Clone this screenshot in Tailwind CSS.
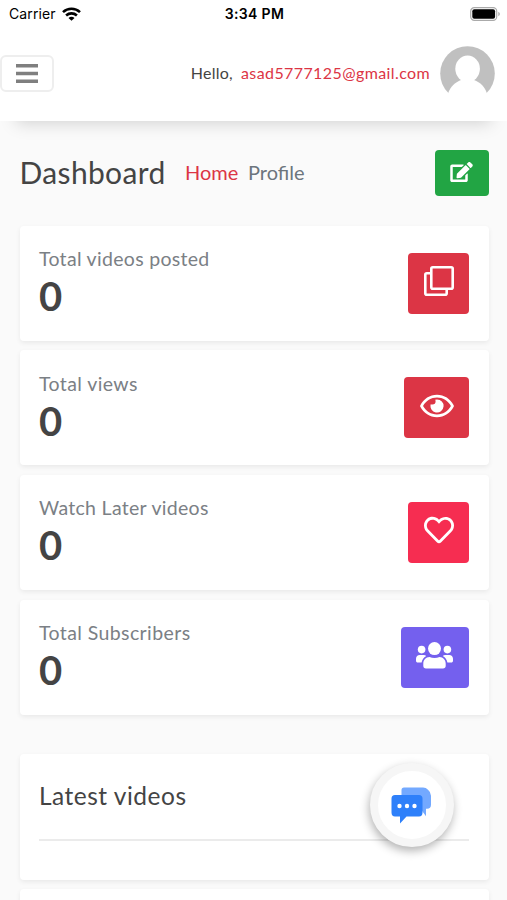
<!DOCTYPE html>
<html lang="en">
<head>
    <meta charset="UTF-8">
    <meta name="viewport" content="width=device-width, initial-scale=1.0">
    <title>Dashboard</title>
    <script src="https://cdn.jsdelivr.net/npm/@tailwindcss/browser@4"></script>
</head>
<body class="bg-[#fafafa] font-[Lato,sans-serif] text-[#444] h-[900px] overflow-hidden relative">
    <!-- Header -->
    <header class="relative h-[121px] bg-white shadow-[0_18px_16px_-16px_rgba(0,0,0,0.17)]">
        <!-- Status bar -->
        <div class="grid grid-cols-3 items-center h-[27px] pl-[9px] pr-[7px] font-[Inter,sans-serif] text-black">
            <div class="flex items-center gap-1.5 text-[14px] tracking-[0.1px]">
                <span>Carrier</span>
                <svg class="w-[19px] h-[14px]" viewBox="0 0 19 14" fill="none" stroke="currentColor" stroke-width="2.6">
                    <path d="M1 5.1C5.8.6 13.2.6 18 5.1"/>
                    <path d="M4.1 8.5c3.1-2.8 7.7-2.8 10.8 0"/>
                    <path d="M9.5 13.8 6.5 10.9c1.7-1.5 4.3-1.5 6 0z" fill="currentColor" stroke="none"/>
                </svg>
            </div>
            <div class="text-center text-[14px] font-semibold tracking-[0.35px]">3:34 PM</div>
            <svg class="justify-self-end w-[30px] h-[14px]" viewBox="0 0 30 14">
                <rect x=".7" y=".7" width="26" height="12.6" rx="3.6" fill="#fff" stroke="#aaa" stroke-width="1.2"/>
                <rect x="2.3" y="2.3" width="22.8" height="9.4" rx="2" fill="#000"/>
                <path d="M28.3 4.8c2 .8 2 3.6 0 4.4z" fill="#aaa"/>
            </svg>
        </div>
        <!-- Navbar -->
        <div class="flex items-center h-[93px] pr-[12px]">
            <button class="flex items-center justify-center w-[54px] h-[37px] border-2 border-[#eee] rounded-md">
                <svg class="w-[22px] h-[19px]" viewBox="0 0 22 19" fill="none" stroke="#7f7f7f" stroke-width="3.4">
                    <path d="M0 1.7h22M0 9.500h22M0 17.300h22"/>
                </svg>
            </button>
            <span class="ml-auto pb-px text-[16px] tracking-[0.25px]">Hello,</span>
            <a href="#" class="ml-2 pb-px w-[188px] text-[16px] tracking-[0.4px] text-[#dc3545]">asad5777125@gmail.com</a>
            <svg class="ml-[11px] w-[55px] h-[55px]" viewBox="0 0 55 55">
                <circle cx="27.5" cy="27.5" r="27.3" fill="#c0c0c0"/>
                <ellipse cx="27.6" cy="22.800" rx="12.300" ry="13.200" fill="#fff"/>
                <path d="M8 47.500C10.500 40.500 15 36.500 21 34h13c6.500 2.500 10.500 6.500 13 13.500V55H8z" fill="#fff"/>
            </svg>
        </div>
    </header>

    <main class="pl-[19.5px] pr-[18.5px]">
        <!-- Title row -->
        <div class="flex items-center mt-[29px] h-[46px]">
            <h1 class="w-[165.5px] pb-0.5 text-[30px] tracking-[0.35px] whitespace-nowrap">Dashboard</h1>
            <nav class="flex pb-0.5 text-[20px] whitespace-nowrap">
                <a href="#" class="w-[63px] text-[#dc3545]">Home</a>
                <span class="text-[#6c757d]">Profile</span>
            </nav>
            <button class="ml-auto flex items-center justify-center w-[54px] h-[46px] pb-0.5 rounded-[4px] bg-[#22a544]">
                <svg class="w-[23px] h-[20px]" viewBox="0 0 576 512" fill="#fff">
                    <path d="M402.600 83.200l90.200 90.200c3.800 3.800 3.800 10 0 13.800L274.400 405.600l-92.800 10.300c-12.400 1.400-22.900-9.100-21.500-21.500l10.300-92.800L388.800 83.200c3.800-3.800 10-3.800 13.800 0zm162-22.900l-48.800-48.800c-15.200-15.200-39.900-15.200-55.200 0l-35.400 35.400c-3.800 3.800-3.800 10 0 13.800l90.200 90.200c3.800 3.800 10 3.800 13.800 0l35.400-35.400c15.200-15.300 15.200-40 0-55.200zM384 346.200V448H64V128h229.800c3.200 0 6.200-1.300 8.500-3.500l40-40c7.600-7.600 2.200-20.500-8.500-20.500H48C21.500 64 0 85.500 0 112v352c0 26.500 21.500 48 48 48h352c26.500 0 48-21.500 48-48V306.200c0-10.700-12.900-16-20.500-8.500l-40 40c-2.200 2.300-3.500 5.300-3.500 8.500z"/>
                </svg>
            </button>
        </div>

        <!-- Stat cards -->
        <div class="mt-[29.5px] flex flex-col gap-[9.7px]">
            <div class="flex items-center justify-between h-[115px] px-[19.5px] bg-white rounded-[4px] shadow-[0_2px_5px_rgba(0,0,0,0.07)]">
                <div class="pb-0.5">
                    <div class="text-[19.5px] leading-[28px] tracking-[0.3px] text-[#7b8085]">Total videos posted</div>
                    <div class="text-[40px] leading-[46px] font-bold">0</div>
                </div>
                <div class="flex items-center justify-center w-[61px] h-[61px] pb-1 rounded-[4px] bg-[#dc3545]">
                    <svg class="w-[30px] h-[30px]" viewBox="0 0 30 30" fill="none" stroke="#fff" stroke-width="2.600" stroke-linejoin="round">
                        <rect x="7.300" y="1.300" width="21.400" height="21.400" rx="1.500"/>
                        <path d="M7 7.300H2.800Q1.300 7.300 1.300 8.800V27.200Q1.300 28.700 2.800 28.700H21.200Q22.700 28.700 22.700 27.200V23"/>
                    </svg>
                </div>
            </div>
            <div class="flex items-center justify-between h-[115px] px-[19.5px] bg-white rounded-[4px] shadow-[0_2px_5px_rgba(0,0,0,0.07)]">
                <div class="pb-0.5">
                    <div class="text-[19.5px] leading-[28px] tracking-[0.4px] text-[#7b8085]">Total views</div>
                    <div class="text-[40px] leading-[46px] font-bold">0</div>
                </div>
                <div class="flex items-center justify-center w-[65px] h-[61px] pb-1 rounded-[4px] bg-[#dc3545]">
                    <svg class="w-[34px] h-[30px]" viewBox="0 0 576 512" fill="#fff">
                        <path d="M288 144a110.940 110.940 0 0 0-31.240 5 55.400 55.400 0 0 1 7.240 27 56 56 0 0 1-56 56 55.400 55.400 0 0 1-27-7.240A111.710 111.710 0 1 0 288 144zm284.520 97.400C518.290 135.590 410.930 64 288 64S57.680 135.640 3.480 241.410a32.350 32.350 0 0 0 0 29.190C57.710 376.410 165.070 448 288 448s230.320-71.640 284.520-177.410a32.350 32.350 0 0 0 0-29.190zM288 400c-98.650 0-189.090-55-237.930-144C98.910 167 189.340 112 288 112s189.090 55 237.930 144C477.100 345 386.660 400 288 400z"/>
                    </svg>
                </div>
            </div>
            <div class="flex items-center justify-between h-[115px] px-[19.5px] bg-white rounded-[4px] shadow-[0_2px_5px_rgba(0,0,0,0.07)]">
                <div class="pb-0.5">
                    <div class="text-[19.5px] leading-[28px] tracking-[0.3px] text-[#7b8085]">Watch Later videos</div>
                    <div class="text-[40px] leading-[46px] font-bold">0</div>
                </div>
                <div class="flex items-center justify-center w-[61px] h-[61px] pb-1 rounded-[4px] bg-[#f62d51]">
                    <svg class="w-[30px] h-[30px]" viewBox="0 0 512 512" fill="#fff">
                        <path d="M458.400 64.300C400.600 15.700 311.300 23 256 79.300 200.700 23 111.400 15.600 53.600 64.300-21.600 127.600-10.600 230.800 43 285.500l175.400 178.700c10 10.200 23.400 15.900 37.600 15.900 14.300 0 27.600-5.600 37.600-15.800L469 285.600c53.500-54.700 64.700-157.900-10.600-221.300zm-23.600 187.500L259.400 430.500c-2.400 2.400-4.400 2.400-6.800 0L77.200 251.800c-36.500-37.200-43.900-107.600 7.300-150.700 38.900-32.700 98.900-27.800 136.500 10.500l35 35.700 35-35.700c37.800-38.500 97.800-43.200 136.500-10.600 51.100 43.100 43.500 113.900 7.300 150.800z"/>
                    </svg>
                </div>
            </div>
            <div class="flex items-center justify-between h-[115px] px-[19.5px] bg-white rounded-[4px] shadow-[0_2px_5px_rgba(0,0,0,0.07)]">
                <div class="pb-0.5">
                    <div class="text-[19.5px] leading-[28px] tracking-[0.4px] text-[#7b8085]">Total Subscribers</div>
                    <div class="text-[40px] leading-[46px] font-bold">0</div>
                </div>
                <div class="flex items-center justify-center w-[68.5px] h-[61px] pb-1 rounded-[4px] bg-[#7460ee]">
                    <svg class="w-[37px] h-[27px]" viewBox="0 0 37 27" fill="#fff">
                        <circle cx="18.500" cy="6.600" r="6.500"/>
                        <circle cx="5.600" cy="7.600" r="3.800"/>
                        <circle cx="31.400" cy="7.600" r="3.800"/>
                        <path d="M13.500 14.900c3 1.400 7 1.400 10 0 3.700 0 6.200 3 6.200 6.500v2.300c0 1.700-1 2.700-2.700 2.700H10c-1.700 0-2.700-1-2.700-2.700v-2.300c0-3.500 2.500-6.500 6.200-6.500z"/>
                        <path d="M3.700 13h4c1 0 1.900.4 2.500 1-2.600 1.500-4.100 3.600-4.600 6.600H1.800C.7 20.600 0 19.800 0 18.800v-2C0 14.700 1.600 13 3.700 13z"/>
                        <path d="M33.300 13h-4c-1 0-1.900.4-2.500 1 2.600 1.500 4.100 3.600 4.600 6.600h3.800c1.100 0 1.800-.8 1.800-1.800v-2c0-2.100-1.600-3.800-3.700-3.800z"/>
                    </svg>
                </div>
            </div>
        </div>

        <!-- Latest videos -->
        <section class="mt-[39px] h-[126px] px-[19.5px] pt-[24px] bg-white rounded-[4px] shadow-[0_2px_5px_rgba(0,0,0,0.07)]">
            <h2 class="text-[24.500px] leading-[36px] tracking-[0.5px]">Latest videos</h2>
            <hr class="mt-[25px] border-t-2 border-[#ebebeb]">
        </section>
        <section class="mt-[9px] h-[40px] bg-white rounded-[4px] shadow-[0_2px_5px_rgba(0,0,0,0.07)]"></section>
    </main>

    <!-- Chat button -->
    <button class="absolute left-[369.5px] top-[763px] flex items-center justify-center w-[84px] h-[84px] pr-px pt-px rounded-full border-[8px] border-[#f6f6f6] bg-white shadow-[-1px_4px_10px_rgba(0,0,0,0.3)]">
        <svg class="w-[41px] h-[37px]" viewBox="0 0 41 37">
            <path d="M13 0.500h19q3 0 5 2.300 3 2.400 3 6v9q0 4-4 4h-1v7.500l-5.500-7.500H10.500V3q0-2.500 2.500-2.500z" fill="#73a9ff"/>
            <path d="M4 8h24q3.500 0 3.500 3.500v14q0 4-3.500 4H15.500L9 36.500V29.500H4Q.5 29.500.5 25.500v-14Q.5 8 4 8z" fill="#2e80fa"/>
            <g fill="#fff">
                <circle cx="8.500" cy="19" r="2.200"/>
                <circle cx="16" cy="19" r="2.200"/>
                <circle cx="23.500" cy="19" r="2.200"/>
            </g>
        </svg>
    </button>
</body>
</html>
